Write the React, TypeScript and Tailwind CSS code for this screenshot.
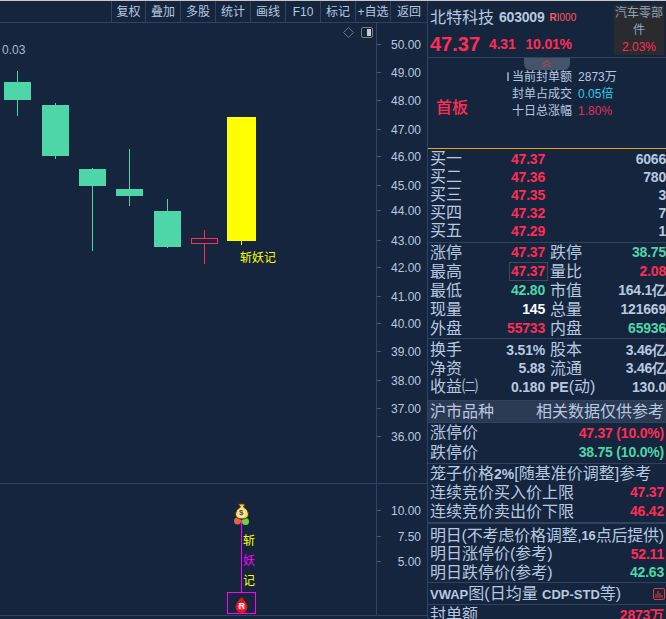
const num = "font-['Liberation_Sans',sans-serif] font-bold text-[14px] tracking-[-0.2px]";
const red = 'text-[#ff2d55]';
const green = 'text-[#4dd6a8]';
const gray = 'text-[#b8c8e0]';

const toolbar = [
  ['复权', 'w-[34px]'],
  ['叠加', 'w-[35px]'],
  ['多股', 'w-[35px]'],
  ['统计', 'w-[35px]'],
  ['画线', 'w-[35px]'],
  ['F10', 'w-[35px]'],
  ['标记', 'w-[35px]'],
  ['+自选', 'w-[35px]'],
  ['返回', 'w-[37px]'],
];

const priceAxis = [
  ['50.00', 44],
  ['49.00', 72],
  ['48.00', 100],
  ['47.00', 129],
  ['46.00', 156],
  ['45.00', 185],
  ['44.00', 210],
  ['43.00', 240],
  ['42.00', 267],
  ['41.00', 296],
  ['40.00', 323],
  ['39.00', 351],
  ['38.00', 380],
  ['37.00', 408],
  ['36.00', 436],
] as const;

const volumeAxis = [
  ['10.00', 510],
  ['7.50', 536],
  ['5.00', 561],
] as const;

// x of wick, wick top/bottom, body top/bottom
const candles = [
  { x: 4, hi: 71, lo: 116, top: 82, bottom: 100 },
  { x: 42, hi: 103, lo: 159, top: 105, bottom: 156 },
  { x: 79, hi: 168, lo: 251, top: 169, bottom: 186 },
  { x: 116, hi: 149, lo: 206, top: 189, bottom: 196 },
  { x: 154, hi: 199, lo: 248, top: 211, bottom: 247 },
];

const quotes = [
  ['买一', '47.37', '6066'],
  ['买二', '47.36', '780'],
  ['买三', '47.35', '3'],
  ['买四', '47.32', '7'],
  ['买五', '47.29', '1'],
];

const stats = [
  ['涨停', '47.37', red, '跌停', '38.75', green],
  ['最高', '47.37', red, '量比', '2.08', red],
  ['最低', '42.80', green, '市值', '164.1亿', gray],
  ['现量', '145', 'text-white', '总量', '121669', gray],
  ['外盘', '55733', red, '内盘', '65936', green],
];

const extras = [
  ['换手', '3.51%', '股本', '3.46亿'],
  ['净资', '5.88', '流通', '3.46亿'],
  ['收益㈡', '0.180', 'PE', '130.0'],
];

function PriceChart() {
  return (
    <div className="flex h-[461px] border-b border-[#2f425f]">
      <div className="relative w-[376px]">
        <span className="absolute left-[2px] top-[19px] text-xs text-[#a9b8cc]">0.03</span>
        <svg width="376" height="460" viewBox="0 23 376 460" className="absolute inset-0">
          {candles.map((c) => (
            <g key={c.x} fill="#4dd6a8">
              <rect x={c.x + 13} y={c.hi} width="1" height={c.lo - c.hi} />
              <rect x={c.x} y={c.top} width="27" height={c.bottom - c.top} />
            </g>
          ))}
          <rect x="204" y="230" width="1" height="34" fill="#ff2d55" />
          <rect x="191.5" y="238.5" width="26" height="5" fill="#14253d" stroke="#ff2d55" />
          <rect x="241" y="240" width="1" height="5" fill="#ffff00" />
          <rect x="227" y="117" width="29" height="124" fill="#ffff00" />
          <path d="M343.5 32.5 L348.5 27.5 L353.5 32.5 L348.5 37.5 Z" fill="none" stroke="#6b7480" />
          <rect x="361.5" y="27.5" width="11" height="10" rx="1.5" fill="none" stroke="#7a7f86" />
          <rect x="367" y="29" width="4" height="7" fill="#c9ccd0" />
        </svg>
        <span className="absolute left-[240px] top-[227px] text-xs leading-4 text-[#ffff00]">斩妖记</span>
      </div>
      <div className="relative flex-1 border-l border-[#2f425f]">
        {priceAxis.map(([label, y]) => (
          <div key={label} className="absolute left-0 right-[6px] flex h-4 items-center justify-between" style={{ top: y - 23 - 7 }}>
            <span className="mb-[2px] h-px w-[4px] bg-[#46597a]" />
            <span className="text-xs text-[#b8c8e0]">{label}</span>
          </div>
        ))}
      </div>
    </div>
  );
}

function VolumeChart() {
  return (
    <div className="flex h-[132px] border-b border-[#2f425f]">
      <div className="relative w-[376px]">
        <svg width="376" height="131" viewBox="0 484 376 131" className="absolute inset-0">
          <rect x="241" y="520" width="1" height="72" fill="#ff00ff" />
          <rect x="227.5" y="592.5" width="28" height="21" fill="none" stroke="#ff00ff" />
          <circle cx="237.5" cy="521" r="3.5" fill="#e8604f" />
          <circle cx="245.5" cy="521.5" r="3.5" fill="#6fd43c" />
          <path d="M238 504h7l-1.5 3q5 2.5 5 7q0 5-6.5 5t-6.5-5q0-4.5 5-7z" fill="#f7dc5a" stroke="#4a2f14" />
          <circle cx="241.500" cy="513" r="4" fill="#f3e9c4" />
          <path d="M241.500 597q6 6.500 6 10a6 6 0 0 1-12 0q0-3.500 6-10z" fill="#e8101a" />
          <circle cx="241.500" cy="606.500" r="3.800" fill="#ff3344" />
        </svg>
        <span className="absolute left-[239px] top-[24px] text-[8px] leading-[10px] font-bold text-[#6b3b12]">$</span>
        <span className="absolute left-[238.500px] top-[117px] text-[9px] leading-[10px] font-bold text-white">R</span>
        <span className="absolute left-[243px] top-[49px] text-xs leading-4 text-[#ffff00]">斩</span>
        <span className="absolute left-[243px] top-[69px] text-xs leading-4 text-[#ff00ff]">妖</span>
        <span className="absolute left-[243px] top-[89px] text-xs leading-4 text-[#ffff00]">记</span>
      </div>
      <div className="relative flex-1 border-l border-[#2f425f]">
        {volumeAxis.map(([label, y]) => (
          <div key={label} className="absolute left-0 right-[6px] flex h-4 items-center justify-between" style={{ top: y - 484 - 7 }}>
            <span className="mb-[2px] h-px w-[4px] bg-[#46597a]" />
            <span className="text-xs text-[#b8c8e0]">{label}</span>
          </div>
        ))}
      </div>
    </div>
  );
}

function SidePanel() {
  return (
    <div className="w-[239px] flex-none overflow-hidden border-l border-[#2f425f] text-base text-[#b8c8e0] whitespace-nowrap">
      {/* header */}
      <div className="flex h-[57px] border-b border-[#2f425f] pl-[2px]">
        <div className="w-[182px] flex-none">
          <div className="flex h-[33px] items-center">
            <span className="text-base">北特科技</span>
            <span className={`${num} ml-[5px] text-[#b8c8e0]`}>603009</span>
            <span className="ml-[5px] text-[10px] text-[#ff5a5a]"><b>R</b>I000</span>
          </div>
          <div className={`flex h-[20px] items-center ${red}`}>
            <span className="font-['Liberation_Sans',sans-serif] font-bold text-[20px]">47.37</span>
            <span className={`${num} ml-[9px]`}>4.31</span>
            <span className={`${num} ml-[10px]`}>10.01%</span>
          </div>
        </div>
        <div className="mt-[4px] ml-[2px] flex h-[50px] w-[50px] flex-col items-center bg-[#2a2b2e] text-xs leading-[17px] text-[#8fa5c0]">
          <span className="whitespace-nowrap">汽车零部</span>
          <span>件</span>
          <span className="text-[#ff2d55]">2.03%</span>
        </div>
      </div>

      {/* seal info */}
      <div className="relative flex h-[91px] border-b border-[#e8a317]">
        <div className="absolute left-[96px] top-0 flex h-[12px] w-[46px] items-center justify-center rounded-b-md bg-[#44546a]">
          <svg width="10" height="8" viewBox="0 0 10 8" fill="none" stroke="#e0383c">
            <path d="M1 4l4-3 4 3M1 7l4-3 4 3" />
          </svg>
        </div>
        <div className={`ml-[8px] mt-[40px] text-[16px] leading-5 font-medium ${red}`}>首板</div>
        <div className="ml-[44px] mt-[11px] text-xs leading-[17px]">
          <div className="relative">
            <span className="absolute left-[-5px] top-[3px] h-[9px] w-[2px] rounded-t bg-[#8a8f96]" />
            当前封单额<span className="ml-[6px]">2873万</span>
          </div>
          <div>封单占成交<span className="ml-[6px] text-[#22d3ee]">0.05倍</span></div>
          <div>十日总涨幅<span className="ml-[6px] text-[#e0305a]">1.80%</span></div>
        </div>
      </div>

      {/* order book */}
      <div className="h-[94px] border-b border-[#2f425f] pl-[2px] pt-px">
        {quotes.map(([label, price, vol]) => (
          <div key={label} className="flex h-[18px] items-center">
            <span className="w-[66px]">{label}</span>
            <span className={`${num} w-[49px] text-right ${red}`}>{price}</span>
            <span className={`${num} flex-1 text-right`}>{vol}</span>
          </div>
        ))}
      </div>

      {/* stats */}
      <div className="h-[96px] border-b border-[#2f425f] pl-[2px]">
        {stats.map(([l1, v1, c1, l2, v2, c2], i) => (
          <div key={l1} className="flex h-[19px] items-center">
            <span className="w-[40px]">{l1}</span>
            <span className={`w-[75px] flex-none text-right ${num} ${c1}`}>
              {i === 1 ? <span className="-mr-[3px] inline-block border border-[#44484f] pl-px pr-[2px] leading-[17px]">{v1}</span> : v1}
            </span>
            <span className="ml-[5px] w-[32px]">{l2}</span>
            <span className={`flex-1 text-right ${num} ${c2}`}>{v2}</span>
          </div>
        ))}
      </div>

      {/* finance */}
      <div className="h-[62px] border-b border-[#2f425f] pl-[2px] pt-[2px]">
        {extras.map(([l1, v1, l2, v2]) => (
          <div key={l1} className="flex h-[18.5px] items-center">
            <span className="w-[56px]">{l1}</span>
            <span className={`w-[59px] flex-none text-right ${num}`}>{v1}</span>
            <span className="ml-[5px] w-[45px]">
              {l2 === 'PE' ? <><b className="text-sm">PE</b>(动)</> : l2}
            </span>
            <span className={`flex-1 text-right ${num}`}>{v2}</span>
          </div>
        ))}
      </div>

      <div className="flex h-[22px] items-center justify-between border-b border-[#2f425f] bg-[#2a3a52] px-[2px]">
        <span>沪市品种</span>
        <span>相关数据仅供参考</span>
      </div>

      {/* limit prices */}
      <div className="h-[41px] border-b border-[#2f425f] pl-[2px] pr-[2px]">
        <div className="flex h-[20px] items-center justify-between">
          <span>涨停价</span>
          <span className={`${num} ${red}`}>47.37 (10.0%)</span>
        </div>
        <div className="flex h-[19px] items-center justify-between">
          <span>跌停价</span>
          <span className={`${num} ${green}`}>38.75 (10.0%)</span>
        </div>
      </div>

      {/* price cage */}
      <div className="h-[60px] border-b-2 border-[#2f425f] pl-[2px]">
        <div className="flex h-[19px] items-center">
          笼子价格<b className="text-sm">2%</b>[随基准价调整]参考
        </div>
        <div className="flex h-[19px] items-center justify-between pr-[2px]">
          <span>连续竞价买入价上限</span>
          <span className={`${num} ${red}`}>47.37</span>
        </div>
        <div className="flex h-[19px] items-center justify-between pr-[2px]">
          <span>连续竞价卖出价下限</span>
          <span className={`${num} ${red}`}>46.42</span>
        </div>
      </div>

      {/* next day */}
      <div className="h-[59px] border-b border-[#2f425f] pl-[2px] pt-[2px]">
        <div className="flex h-[19px] items-center tracking-[-0.2px]">明日(不考虑价格调整,<b className="text-[13px]">16</b>点后提供)</div>
        <div className="flex h-[18px] items-center justify-between pr-[2px]">
          <span>明日涨停价(参考)</span>
          <span className={`${num} ${red}`}>52.11</span>
        </div>
        <div className="flex h-[19px] items-center justify-between pr-[2px]">
          <span>明日跌停价(参考)</span>
          <span className={`${num} ${green}`}>42.63</span>
        </div>
      </div>

      <div className="flex h-[22px] items-center justify-between border-b border-[#2f425f] pl-[2px] pr-px">
        <span><b className="text-[13px]">VWAP</b>图(日均量 <b className="text-[13px]">CDP-STD</b>等)</span>
        <svg width="12" height="12" viewBox="0 0 12 12" fill="none" stroke="#e0383c">
          <rect x="0.5" y="0.5" width="11" height="11" rx="1.5" />
          <path d="M3 10V6M5 10V3M7 10V5M9 10V7" />
        </svg>
      </div>

      <div className="mt-[2px] flex h-[12px] justify-between px-[2px]">
        <span className="leading-4">封单额</span>
        <span className={`${num} leading-4 ${red}`}>2873万</span>
      </div>
    </div>
  );
}

export default function App() {
  return (
    <div className="flex h-[619px] w-[666px] overflow-hidden border-t border-[#c8c8c8] bg-[#14253d] font-['Liberation_Sans','Noto_Sans_CJK_SC',sans-serif] text-[#b8c8e0]">
      <div className="w-[427px] flex-none">
        <div className="flex h-[22px] justify-end border-b border-[#2f425f]">
          {toolbar.map(([label, w]) => (
            <div key={label} className={`flex ${w} items-center justify-center border-l border-[#2f425f] text-xs whitespace-nowrap`}>
              {label}
            </div>
          ))}
        </div>
        <PriceChart />
        <VolumeChart />
      </div>
      <SidePanel />
    </div>
  );
}
